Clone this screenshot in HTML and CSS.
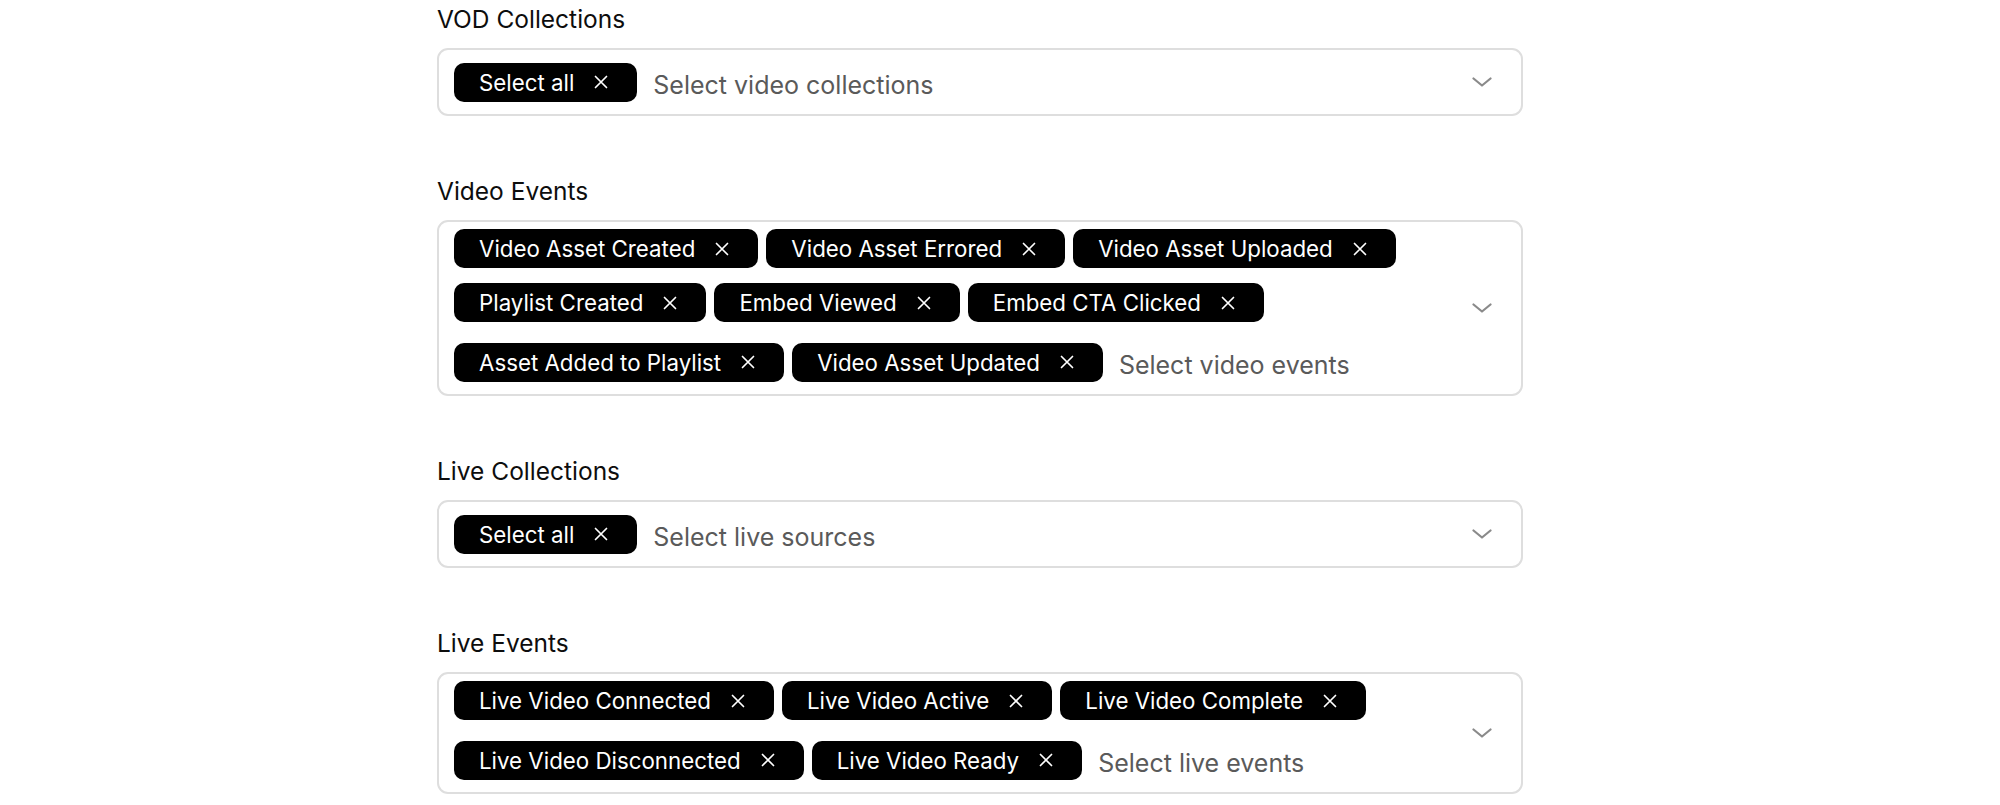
FILE: index.html
```html
<!DOCTYPE html>
<html lang="en">
<head>
<meta charset="utf-8">
<title>Event settings</title>
<link rel="stylesheet" href="styles.css">
</head>
<body>
<main class="form">
  <section class="field">
    <div class="label">VOD Collections</div>
    <div class="select">
      <div class="values">
        <span class="tag">Select all<svg class="x" viewBox="0 0 14 14"><path d="M1.5 1.5L12.5 12.5M12.5 1.5L1.5 12.5"/></svg></span>
        <span class="placeholder">Select video collections</span>
      </div>
      <div class="indicator"><svg class="chev" viewBox="0 0 20 10"><path d="M1.5 1.5L10 8.5L18.5 1.5"/></svg></div>
    </div>
  </section>

  <section class="field">
    <div class="label">Video Events</div>
    <div class="select">
      <div class="values">
        <span class="tag">Video Asset Created<svg class="x" viewBox="0 0 14 14"><path d="M1.5 1.5L12.5 12.5M12.5 1.5L1.5 12.5"/></svg></span>
        <span class="tag">Video Asset Errored<svg class="x" viewBox="0 0 14 14"><path d="M1.5 1.5L12.5 12.5M12.5 1.5L1.5 12.5"/></svg></span>
        <span class="tag">Video Asset Uploaded<svg class="x" viewBox="0 0 14 14"><path d="M1.5 1.5L12.5 12.5M12.5 1.5L1.5 12.5"/></svg></span>
        <span class="tag">Playlist Created<svg class="x" viewBox="0 0 14 14"><path d="M1.5 1.5L12.5 12.5M12.5 1.5L1.5 12.5"/></svg></span>
        <span class="tag">Embed Viewed<svg class="x" viewBox="0 0 14 14"><path d="M1.5 1.5L12.5 12.5M12.5 1.5L1.5 12.5"/></svg></span>
        <span class="tag">Embed CTA Clicked<svg class="x" viewBox="0 0 14 14"><path d="M1.5 1.5L12.5 12.5M12.5 1.5L1.5 12.5"/></svg></span>
        <span class="tag">Asset Added to Playlist<svg class="x" viewBox="0 0 14 14"><path d="M1.5 1.5L12.5 12.5M12.5 1.5L1.5 12.5"/></svg></span>
        <span class="tag">Video Asset Updated<svg class="x" viewBox="0 0 14 14"><path d="M1.5 1.5L12.5 12.5M12.5 1.5L1.5 12.5"/></svg></span>
        <span class="placeholder">Select video events</span>
      </div>
      <div class="indicator"><svg class="chev" viewBox="0 0 20 10"><path d="M1.5 1.5L10 8.5L18.5 1.5"/></svg></div>
    </div>
  </section>

  <section class="field">
    <div class="label">Live Collections</div>
    <div class="select">
      <div class="values">
        <span class="tag">Select all<svg class="x" viewBox="0 0 14 14"><path d="M1.5 1.5L12.5 12.5M12.5 1.5L1.5 12.5"/></svg></span>
        <span class="placeholder">Select live sources</span>
      </div>
      <div class="indicator"><svg class="chev" viewBox="0 0 20 10"><path d="M1.5 1.5L10 8.5L18.5 1.5"/></svg></div>
    </div>
  </section>

  <section class="field">
    <div class="label">Live Events</div>
    <div class="select">
      <div class="values">
        <span class="tag">Live Video Connected<svg class="x" viewBox="0 0 14 14"><path d="M1.5 1.5L12.5 12.5M12.5 1.5L1.5 12.5"/></svg></span>
        <span class="tag">Live Video Active<svg class="x" viewBox="0 0 14 14"><path d="M1.5 1.5L12.5 12.5M12.5 1.5L1.5 12.5"/></svg></span>
        <span class="tag">Live Video Complete<svg class="x" viewBox="0 0 14 14"><path d="M1.5 1.5L12.5 12.5M12.5 1.5L1.5 12.5"/></svg></span>
        <span class="tag">Live Video Disconnected<svg class="x" viewBox="0 0 14 14"><path d="M1.5 1.5L12.5 12.5M12.5 1.5L1.5 12.5"/></svg></span>
        <span class="tag">Live Video Ready<svg class="x" viewBox="0 0 14 14"><path d="M1.5 1.5L12.5 12.5M12.5 1.5L1.5 12.5"/></svg></span>
        <span class="placeholder">Select live events</span>
      </div>
      <div class="indicator"><svg class="chev" viewBox="0 0 20 10"><path d="M1.5 1.5L10 8.5L18.5 1.5"/></svg></div>
    </div>
  </section>
</main>
</body>
</html>
```

FILE: styles.css
```css
html, body {
  margin: 0;
  padding: 0;
  background: #ffffff;
}

body {
  font-family: Inter, "Noto Sans", "Liberation Sans", sans-serif;
  color: #111111;
}

.form {
  width: 1086px;
  margin-left: 437px;
  padding-top: 4px;
  display: flex;
  flex-direction: column;
  gap: 60px;
}

.field {
  display: flex;
  flex-direction: column;
  gap: 14px;
}

.label {
  font-size: 24.5px;
  line-height: 30px;
  color: #0d0d0d;
}

.select {
  display: flex;
  align-items: center;
  border: 2px solid #dedede;
  border-radius: 11px;
  padding: 7px 0 7px 15px;
  background: #ffffff;
}

.values {
  flex: 1;
  display: flex;
  flex-wrap: wrap;
  align-items: center;
  gap: 15px 8px;
}

.tag {
  display: inline-flex;
  align-items: center;
  height: 39px;
  padding: 0 29px 0 25px;
  background: #000000;
  color: #ffffff;
  border-radius: 10px;
  font-size: 22.3px;
  white-space: nowrap;
}

.x {
  width: 14px;
  height: 14px;
  margin-left: 20px;
  fill: none;
  stroke: #ffffff;
  stroke-width: 1.7;
  stroke-linecap: round;
}

.placeholder {
  flex: 1 1 200px;
  height: 50px;
  display: flex;
  align-items: center;
  padding: 5px 0 0 8px;
  box-sizing: border-box;
  font-size: 25px;
  color: #5a5a5a;
  white-space: nowrap;
}

.indicator {
  width: 66px;
  display: flex;
  justify-content: flex-end;
  padding-right: 29px;
  box-sizing: border-box;
  flex-shrink: 0;
}

.chev {
  width: 20px;
  height: 10px;
  fill: none;
  stroke: #8a8a8a;
  stroke-width: 2.2;
  stroke-linecap: round;
  stroke-linejoin: round;
}
```
